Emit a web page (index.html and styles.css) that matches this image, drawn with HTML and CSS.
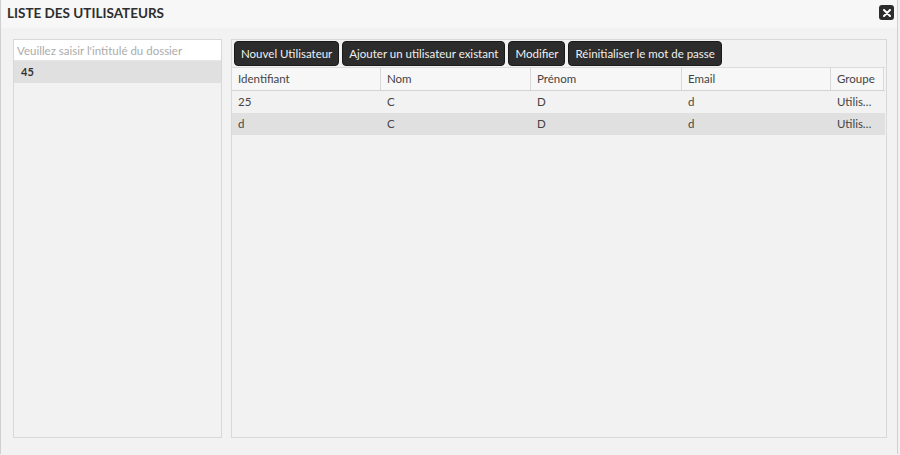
FILE: index.html
```html
<!DOCTYPE html>
<html lang="fr">
<head>
<meta charset="utf-8">
<link rel="stylesheet" href="styles.css">
</head>
<body>
<div class="window">
  <div class="header">
    <div class="title">LISTE DES UTILISATEURS</div>
    <button class="close" aria-label="Fermer">
      <svg width="8" height="8" viewBox="0 0 8 8"><path d="M1 1L7 7M7 1L1 7" stroke="#fff" stroke-width="2" stroke-linecap="round"/></svg>
    </button>
  </div>
  <div class="body">
    <div class="left">
      <input class="search" type="text" placeholder="Veuillez saisir l'intitulé du dossier">
      <div class="folder selected">45</div>
    </div>
    <div class="right">
      <div class="toolbar">
        <button class="btn">Nouvel Utilisateur</button>
        <button class="btn">Ajouter un utilisateur existant</button>
        <button class="btn">Modifier</button>
        <button class="btn">Réinitialiser le mot de passe</button>
      </div>
      <div class="grid">
        <div class="row head">
          <div class="cell">Identifiant</div>
          <div class="cell">Nom</div>
          <div class="cell">Prénom</div>
          <div class="cell">Email</div>
          <div class="cell">Groupe</div>
        </div>
        <div class="row">
          <div class="cell">25</div>
          <div class="cell">C</div>
          <div class="cell">D</div>
          <div class="cell">d</div>
          <div class="cell">Utilis…</div>
        </div>
        <div class="row alt">
          <div class="cell">d</div>
          <div class="cell">C</div>
          <div class="cell">D</div>
          <div class="cell">d</div>
          <div class="cell">Utilis…</div>
        </div>
      </div>
    </div>
  </div>
</div>
</body>
</html>
```
FILE: styles.css
```css
html, body {
  margin: 0;
  padding: 0;
  background: #f2f2f2;
}
body {
  font-family: Lato, "Liberation Sans", sans-serif;
  font-size: 11.5px;
  color: #3a3a3a;
}
.window {
  width: 898px;
  height: 454px;
  border-left: 1px solid #d0d0d0;
  border-right: 1px solid #d0d0d0;
  box-sizing: border-box;
  display: flex;
  flex-direction: column;
  background: #f2f2f2;
}
.header {
  height: 28px;
  flex: none;
  background: #f7f7f7;
  display: flex;
  align-items: center;
  justify-content: space-between;
  padding: 0 3px 0 6px;
}
.title {
  font-weight: 700;
  font-size: 13.5px;
  color: #2e2e2e;
  margin-top: -3px;
}
.close {
  width: 15px;
  height: 15px;
  padding: 0;
  border: none;
  border-radius: 3px;
  background: #2c2c2c;
  display: flex;
  align-items: center;
  justify-content: center;
  margin-top: -3px;
}
.body {
  flex: 1;
  display: flex;
  gap: 9px;
  padding: 11px 10px 16px 12px;
}
.left {
  width: 209px;
  flex: none;
  box-sizing: border-box;
  border: 1px solid #d8d8d8;
  display: flex;
  flex-direction: column;
}
.search {
  height: 21px;
  box-sizing: border-box;
  border: none;
  border-bottom: 1px solid #e6e6e6;
  background: #fff;
  margin: 0;
  padding: 0 3px;
  font-family: inherit;
  font-size: 11.5px;
  color: #333;
  outline: none;
}
.search::placeholder {
  color: #ababab;
}
.folder {
  height: 22px;
  line-height: 22px;
  padding-left: 7px;
  font-weight: 700;
  font-size: 11px;
  color: #333;
}
.folder.selected {
  background: #e0e0e0;
}
.right {
  flex: 1;
  box-sizing: border-box;
  border: 1px solid #d8d8d8;
  display: flex;
  flex-direction: column;
}
.toolbar {
  display: flex;
  gap: 3px;
  padding: 1px 2px 1px 2px;
  height: 27px;
  box-sizing: border-box;
}
.btn {
  height: 25px;
  border: 1px solid #1a1a1a;
  border-radius: 4px;
  background: #2c2c2c;
  color: #f0f0f0;
  font-family: inherit;
  font-size: 11.5px;
  padding: 0 6px;
  margin: 0;
  line-height: 23px;
}
.grid {
  margin-right: 1px;
}
.row {
  display: grid;
  grid-template-columns: 149px 150px 151px 149px 53px;
  height: 22px;
}
.row.head {
  height: 24px;
  background: #f7f7f7;
  border-top: 1px solid #dcdcdc;
  border-bottom: 1px solid #d4d4d4;
  box-sizing: border-box;
}
.row.head .cell {
  border-right: 1px solid #d8d8d8;
  line-height: 22px;
}
.row.alt {
  background: #e0e0e0;
}
.cell {
  padding-left: 6px;
  line-height: 22px;
  white-space: nowrap;
  overflow: hidden;
  color: #444;
}
```
